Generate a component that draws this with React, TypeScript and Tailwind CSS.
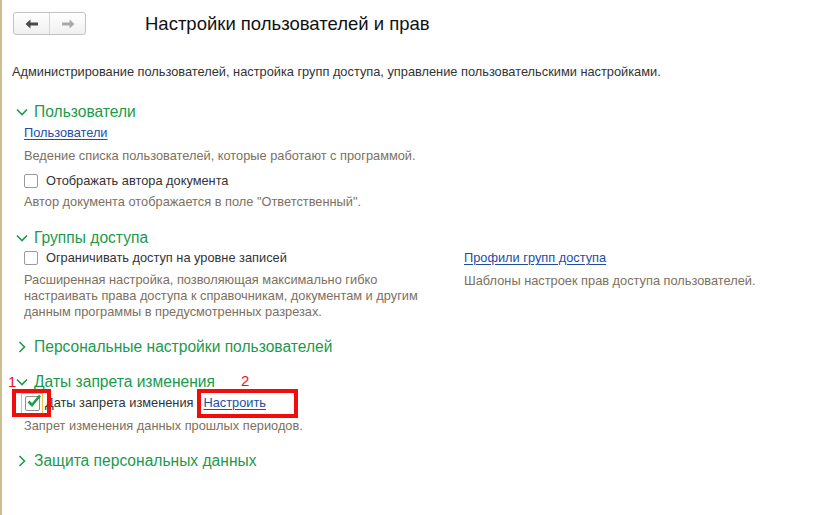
import React from 'react';

const GREEN = 'text-[#1a9a4b]';

const ChevronDown = () => (
  <svg width="12" height="8" viewBox="0 0 12 8" className="shrink-0">
    <path d="M1 1.5 L6 6.5 L11 1.5" fill="none" stroke="#1a9a4b" strokeWidth="1.6" />
  </svg>
);

const ChevronRight = () => (
  <svg width="12" height="12" viewBox="0 0 12 12" className="shrink-0">
    <path d="M3.5 1 L8.5 6 L3.5 11" fill="none" stroke="#1a9a4b" strokeWidth="1.6" />
  </svg>
);

const Header = ({ title, open, className = '' }: { title: string; open: boolean; className?: string }) => (
  <div className={`flex h-[18px] items-center gap-[6px] pl-[4px] text-[15.6px] leading-[18px] ${GREEN} ${className}`}>
    <div className="flex w-[12px] justify-center">{open ? <ChevronDown /> : <ChevronRight />}</div>
    <span>{title}</span>
  </div>
);

const Checkbox = () => (
  <div className="h-[14px] w-[14px] shrink-0 rounded-[2px] border border-[#9a9a9a] bg-white" />
);

const Hint = ({ children, className = '' }: { children: React.ReactNode; className?: string }) => (
  <div className={`text-[12.8px] leading-[16px] text-[#7d705d] ${className}`}>{children}</div>
);

const Link = ({ children }: { children: React.ReactNode }) => (
  <span className="text-[12.8px] leading-[16px] text-[#1d4ea6] underline underline-offset-2">{children}</span>
);

export default function App() {
  return (
    <div
      className="relative h-[515px] w-full overflow-hidden border-l-2 border-[#cdbf8f] bg-white px-[10px] text-[12.8px] leading-[16px] text-[#333]"
      style={{ fontFamily: '"Liberation Sans", Arial, sans-serif' }}
    >
      {/* top bar */}
      <div className="flex items-center pt-[12px]">
        <div className="ml-[1px] flex h-[23px] w-[73px] rounded-[3px] border border-[#c2c2c2] bg-gradient-to-b from-white to-[#f0f0f0]">
          <div className="flex w-[36px] items-center justify-center border-r border-[#d6d6d6]">
            <svg width="14" height="10" viewBox="0 0 14 10">
              <path d="M0.5 5 L5.5 0.5 L5.5 3.6 L13 3.6 L13 6.4 L5.5 6.4 L5.5 9.5 Z" fill="#4a4a4a" />
            </svg>
          </div>
          <div className="flex flex-1 items-center justify-center">
            <svg width="14" height="10" viewBox="0 0 14 10">
              <path d="M13.5 5 L8.5 0.5 L8.5 3.6 L1 3.6 L1 6.4 L8.5 6.4 L8.5 9.5 Z" fill="#a9a9a9" />
            </svg>
          </div>
        </div>
        <div className="ml-[59px] text-[18.5px] leading-[22px] text-[#111]">Настройки пользователей и прав</div>
      </div>

      <div className="mt-[29px] h-[16px] text-[#333]">
        Администрирование пользователей, настройка групп доступа, управление пользовательскими настройками.
      </div>

      {/* Пользователи */}
      <Header title="Пользователи" open className="mt-[23px]" />
      <div className="ml-[12px] mt-[4px] h-[16px]">
        <Link>Пользователи</Link>
      </div>
      <Hint className="ml-[12px] mt-[7px]">Ведение списка пользователей, которые работают с программой.</Hint>
      <div className="ml-[12px] mt-[9px] flex h-[16px] items-center gap-[8px] text-[#333]">
        <Checkbox />
        <span>Отображать автора документа</span>
      </div>
      <Hint className="ml-[12px] mt-[5px]">Автор документа отображается в поле "Ответственный".</Hint>

      {/* Группы доступа */}
      <Header title="Группы доступа" open className="mt-[19px]" />
      <div className="mt-[3px] flex">
        <div className="ml-[12px] w-[428px]">
          <div className="flex h-[16px] items-center gap-[8px] text-[#333]">
            <Checkbox />
            <span>Ограничивать доступ на уровне записей</span>
          </div>
          <Hint className="mt-[6px] leading-[16.5px]">
            Расширенная настройка, позволяющая максимально гибко
            <br />
            настраивать права доступа к справочникам, документам и другим
            <br />
            данным программы в предусмотренных разрезах.
          </Hint>
        </div>
        <div className="ml-[12px]">
          <div className="h-[16px]">
            <Link>Профили групп доступа</Link>
          </div>
          <Hint className="mt-[7px]">Шаблоны настроек прав доступа пользователей.</Hint>
        </div>
      </div>

      <Header title="Персональные настройки пользователей" open={false} className="mt-[18px]" />

      {/* Даты запрета изменения */}
      <Header title="Даты запрета изменения" open className="mt-[17px]" />
      <div className="mt-[1px] flex h-[22px] items-center text-[#333]">
        <div className="ml-[9px] flex h-[21px] w-[22px] items-center justify-center border border-[#f0c24a]">
          <div className="relative h-[15px] w-[15px] rounded-[2px] border border-[#8f8f8f] bg-white">
            <svg width="16" height="14" viewBox="0 0 16 14" className="absolute left-[0px] top-[-3px]">
              <path d="M2.5 7.5 L6 11 L14 1.5" fill="none" stroke="#17a047" strokeWidth="2.6" />
            </svg>
          </div>
        </div>
        <span className="ml-[2px]">Даты запрета изменения</span>
        <span className="ml-[10px]">
          <Link>Настроить</Link>
        </span>
      </div>
      <Hint className="ml-[12px] mt-[4px]">Запрет изменения данных прошлых периодов.</Hint>

      <Header title="Защита персональных данных" open={false} className="mt-[18px]" />

      {/* annotations */}
      <div className="absolute left-[6px] top-[374px] text-[15px] leading-[15px] text-[#e8141c]">1</div>
      <div className="absolute left-[239px] top-[373px] text-[15px] leading-[15px] text-[#e8141c]">2</div>
      <div className="absolute left-[10px] top-[389px] h-[28px] w-[39px] border-[4px] border-[#f20d0d]" />
      <div className="absolute left-[195px] top-[389px] h-[29px] w-[101px] border-[4px] border-[#f20d0d]" />
    </div>
  );
}
